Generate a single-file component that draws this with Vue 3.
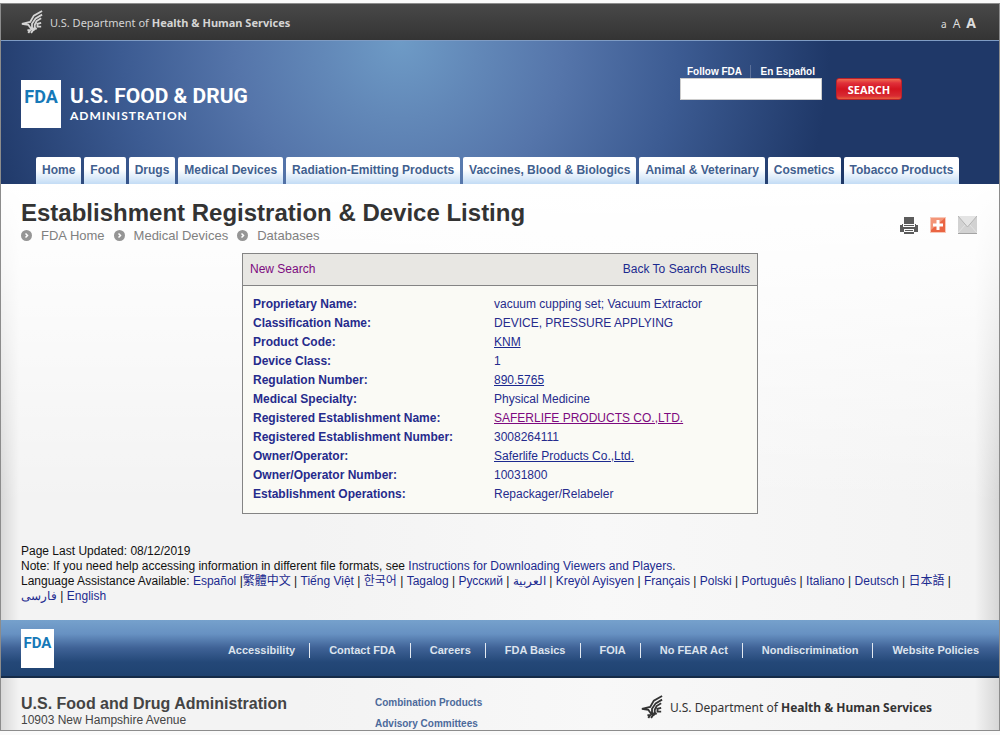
<template>
  <div class="page">
    <header>
      <div class="hhs-bar">
        <a href="#" class="hhs">
          <svg class="eagle" viewBox="0 0 24 26" aria-hidden="true">
            <path :d="eagle" />
          </svg>
          <span>U.S. Department of <b>Health &amp; Human Services</b></span>
        </a>
        <div class="sizes">
          <button class="small" aria-label="Small text">a</button>
          <button class="medium" aria-label="Medium text">A</button>
          <button class="large" aria-label="Large text">A</button>
        </div>
      </div>

      <div class="banner">
        <div class="banner-top">
          <a href="#" class="brand">
            <span class="fda">FDA</span>
            <span class="brand-text">
              <span class="brand-name">U.S. FOOD &amp; DRUG</span>
              <span class="brand-sub">ADMINISTRATION</span>
            </span>
          </a>
          <form class="search" @submit.prevent>
            <div class="search-field">
              <div class="quick-links">
                <a href="#">Follow FDA</a>
                <a href="#">En Español</a>
              </div>
              <input v-model="query" type="text" aria-label="Search FDA" />
            </div>
            <button class="search-button">SEARCH</button>
          </form>
        </div>
        <nav class="tabs">
          <a v-for="tab in tabs" :key="tab" href="#">{{ tab }}</a>
        </nav>
      </div>
    </header>

    <main>
      <div class="title-row">
        <div>
          <h1>Establishment Registration &amp; Device Listing</h1>
          <nav class="crumbs">
            <a v-for="crumb in crumbs" :key="crumb" href="#">
              <svg viewBox="0 0 11 11" aria-hidden="true">
                <circle cx="5.500" cy="5.500" r="5.500" fill="#959595" />
                <path d="M4.500 3.500L6.500 5.500L4.500 7.500" fill="none" stroke="#fff" stroke-width="1.500" />
              </svg>
              <span>{{ crumb }}</span>
            </a>
          </nav>
        </div>
        <div class="tools">
          <button aria-label="Print">
            <svg width="18" height="18" viewBox="0 0 18 18">
              <path d="M4 1H14V8H4ZM0 9H2V8H3V11H15V8H16V9H18V16H14V13H4V16H0ZM5 14H13V15H5ZM4 16H14V18H4Z" fill="#5c5c5c" />
              <path d="M4 9H14V10H4Z" fill="#5c5c5c" />
            </svg>
          </button>
          <button aria-label="Share">
            <svg width="16" height="16" viewBox="0 0 16 16">
              <rect width="16" height="16" fill="#f8c8b8" />
              <rect x="1" y="1" width="14" height="14" fill="#ea6543" />
              <path d="M1 1H15L1 13Z" fill="#f39578" />
              <path d="M6.500 3H9.500V6.500H13V9.500H9.500V13H6.500V9.500H3V6.500H6.500Z" fill="#fff" />
            </svg>
          </button>
          <button aria-label="Email">
            <svg width="19" height="18" viewBox="0 0 19 18">
              <rect width="19" height="18" fill="#d2d2d2" />
              <path d="M0 0H19L9.500 11Z" fill="#e4e4e4" />
              <path d="M0 0L9.500 11L19 0" fill="none" stroke="#b4b4b4" />
              <path d="M0 17L7 9M19 17L12 9" fill="none" stroke="#e2e2e2" />
              <path d="M0 17.500H19" stroke="#a4a4a4" />
            </svg>
          </button>
        </div>
      </div>

      <section class="record">
        <div class="record-head">
          <a href="#" class="visited">New Search</a>
          <a href="#">Back To Search Results</a>
        </div>
        <table>
          <tbody>
            <tr v-for="row in rows" :key="row.label">
              <th scope="row">{{ row.label }}:</th>
              <td>
                <a v-if="row.link" href="#" :class="{ visited: row.visited }">{{ row.value }}</a>
                <template v-else>{{ row.value }}</template>
              </td>
            </tr>
          </tbody>
        </table>
      </section>

      <div class="notes">
        <p>Page Last Updated: 08/12/2019</p>
        <p>Note: If you need help accessing information in different file formats, see <a href="#">Instructions for Downloading Viewers and Players</a>.</p>
        <p>
          Language Assistance Available:
          <template v-for="(lang, i) in languages" :key="lang"><a href="#">{{ lang }}</a><template v-if="i === 0"> |</template><template v-else-if="i < languages.length - 1"> | </template></template>
        </p>
      </div>
    </main>

    <footer>
      <div class="footer-bar">
        <a href="#" class="fda fda-small">FDA</a>
        <nav class="footer-links">
          <a v-for="link in footerLinks" :key="link" href="#">{{ link }}</a>
        </nav>
      </div>
      <div class="footer-info">
        <address>
          <strong>U.S. Food and Drug Administration</strong>
          <span>10903 New Hampshire Avenue</span>
        </address>
        <div class="offices">
          <a href="#">Combination Products</a>
          <a href="#">Advisory Committees</a>
        </div>
        <a href="#" class="hhs hhs-dark">
          <svg class="eagle" viewBox="0 0 24 26" aria-hidden="true">
            <path :d="eagle" />
          </svg>
          <span>U.S. Department of <b>Health &amp; Human Services</b></span>
        </a>
      </div>
    </footer>
  </div>
</template>

<script setup>
import { ref } from 'vue'

const query = ref('')

// shared by the top bar and the footer
const eagle = 'M23 1L14 6L10 13L1 15L8 16L10 19M23 5L16 9L12 15L12 19L15 22M22 9L17 12L15 16L15 19L17 21M22 14L18 15L18 18L22 18M10 19L13 22L11 25M7 22H10L8 25'

const tabs = [
  'Home',
  'Food',
  'Drugs',
  'Medical Devices',
  'Radiation-Emitting Products',
  'Vaccines, Blood & Biologics',
  'Animal & Veterinary',
  'Cosmetics',
  'Tobacco Products'
]

const crumbs = ['FDA Home', 'Medical Devices', 'Databases']

const rows = [
  { label: 'Proprietary Name', value: 'vacuum cupping set; Vacuum Extractor' },
  { label: 'Classification Name', value: 'DEVICE, PRESSURE APPLYING' },
  { label: 'Product Code', value: 'KNM', link: true },
  { label: 'Device Class', value: '1' },
  { label: 'Regulation Number', value: '890.5765', link: true },
  { label: 'Medical Specialty', value: 'Physical Medicine' },
  { label: 'Registered Establishment Name', value: 'SAFERLIFE PRODUCTS CO.,LTD.', link: true, visited: true },
  { label: 'Registered Establishment Number', value: '3008264111' },
  { label: 'Owner/Operator', value: 'Saferlife Products Co.,Ltd.', link: true },
  { label: 'Owner/Operator Number', value: '10031800' },
  { label: 'Establishment Operations', value: 'Repackager/Relabeler' }
]

const languages = [
  'Español', '繁體中文', 'Tiếng Việt', '한국어', 'Tagalog', 'Русский', 'العربية',
  'Kreyòl Ayisyen', 'Français', 'Polski', 'Português', 'Italiano', 'Deutsch',
  '日本語', 'فارسی', 'English'
]

const footerLinks = [
  'Accessibility',
  'Contact FDA',
  'Careers',
  'FDA Basics',
  'FOIA',
  'No FEAR Act',
  'Nondiscrimination',
  'Website Policies'
]
</script>

<style>
body {
  background: #fafafa;
}
</style>

<style scoped>
.page {
  margin: 3px 0 4px;
  border: 1px solid #8c8c8c;
  background: linear-gradient(90deg, #d8d8d8 0, #f3f3f3 18px, #f3f3f3 30%, #f8f8f8 60%, #f3f3f3 calc(100% - 24px), #d6d6d6 100%);
  font-family: "Liberation Sans", Arial, "Noto Sans CJK TC", "Noto Sans CJK KR", sans-serif;
  font-size: 12px;
  line-height: 15px;
}

a {
  color: #1c2a8f;
  text-decoration: none;
}

button {
  padding: 0;
  border: 0;
  background: none;
  font-family: inherit;
  cursor: pointer;
}

.hhs-bar {
  display: flex;
  justify-content: space-between;
  align-items: center;
  height: 36px;
  padding: 0 23px 0 20px;
  border-bottom: 1px solid #7f9cc4;
  background: linear-gradient(#484848, #343434);
}

.hhs {
  display: flex;
  align-items: center;
  gap: 7px;
  color: #d4d4d4;
  font-family: "Noto Sans", sans-serif;
  font-size: 11px;
}

.eagle {
  width: 22px;
  height: 24px;
  fill: none;
  stroke: currentColor;
  stroke-width: 2;
}

.sizes {
  display: flex;
  align-items: baseline;
  gap: 6px;
}

.sizes button {
  color: #ddd;
  font-family: "Noto Sans", sans-serif;
}

.sizes .small {
  font-size: 10px;
}

.sizes .medium {
  font-size: 12px;
}

.sizes .large {
  font-size: 14px;
  font-weight: bold;
}

.banner {
  background: radial-gradient(circle 430px at 40% 0, #6e9bc6 0, #6288b8 18%, #5575aa 38%, #3c5b92 65%, #1f3868 100%) #1f3868;
}

.banner-top {
  display: flex;
  justify-content: space-between;
  height: 92px;
  padding: 24px 97px 0 20px;
}

.brand {
  display: flex;
  align-items: flex-start;
  gap: 9px;
  padding-top: 15px;
  color: #fff;
}

.fda {
  width: 40px;
  height: 48px;
  padding-top: 8px;
  box-sizing: border-box;
  background: #fff;
  color: #1679b8;
  font-family: Roboto, sans-serif;
  font-size: 18px;
  font-weight: bold;
  line-height: 18px;
  text-align: center;
}

.brand-text {
  display: flex;
  flex-direction: column;
  padding-top: 4px;
  font-family: Roboto, sans-serif;
}

.brand-name {
  font-size: 21px;
  font-weight: bold;
  line-height: 24px;
}

.brand-sub {
  font-family: Lato, sans-serif;
  font-size: 12px;
  font-weight: bold;
  line-height: 16px;
  letter-spacing: 1px;
}

.search {
  display: flex;
  align-items: flex-start;
  gap: 14px;
}

.search-field {
  width: 142px;
}

.quick-links {
  display: flex;
  justify-content: space-between;
  padding: 0 7px;
}

.quick-links a {
  color: #fff;
  font-size: 10px;
  font-weight: bold;
  line-height: 13px;
}

.quick-links a + a {
  padding-left: 10px;
  border-left: 1px solid #5d7199;
}

.search input {
  display: block;
  width: 100%;
  height: 22px;
  box-sizing: border-box;
  border: 1px solid #ccc;
  background: #fff;
}

.search-button {
  width: 66px;
  height: 22px;
  margin-top: 13px;
  border: 1px solid #b8222b;
  border-radius: 3px;
  background: linear-gradient(#ef6a4e 0, #e0303a 20%, #d3141f 50%, #d82b33 85%, #e8603d 100%);
  color: #fff;
  font-family: "Open Sans", sans-serif;
  font-size: 11px;
  font-weight: bold;
}

.tabs {
  display: flex;
  gap: 3px;
  padding-left: 35px;
}

.tabs a {
  padding: 6px;
  border-radius: 2px 2px 0 0;
  background: linear-gradient(#fff 45%, #c3dcf5);
  color: #41608f;
  font-weight: bold;
  white-space: nowrap;
}

main {
  padding: 14px 20px 15px;
  background: linear-gradient(#fff 0, #ffffffcc 80px, #ffffff00 320px);
}

.title-row {
  display: flex;
  justify-content: space-between;
}

h1 {
  margin: 0;
  color: #333;
  font-size: 24px;
  line-height: 30px;
}

.crumbs {
  display: flex;
  gap: 9px;
  font-size: 13px;
}

.crumbs a {
  display: flex;
  align-items: center;
  gap: 9px;
  color: #808080;
}

.crumbs svg {
  width: 11px;
  height: 11px;
}

.tools {
  display: flex;
  align-items: center;
  gap: 12px;
  padding: 9px 2px 0 0;
}

.tools svg {
  display: block;
}

.record {
  max-width: 514px;
  margin: 10px auto 30px;
  border: 1px solid #848484;
  background: #fafaf5;
  color: #262b8c;
}

.record-head {
  display: flex;
  justify-content: space-between;
  padding: 8px 7px;
  border-bottom: 1px solid #848484;
  background: #e8e7e3;
}

.visited {
  color: #7d0a80;
}

table {
  width: 100%;
  margin: 9px 0;
  border-spacing: 0;
}

th,
td {
  padding: 2px 10px;
  text-align: left;
}

th {
  width: 231px;
}

td {
  padding-left: 0;
}

td a {
  text-decoration: underline;
}

.notes {
  color: #111;
}

.notes p {
  margin: 0;
}

.footer-bar {
  display: flex;
  justify-content: space-between;
  align-items: center;
  height: 56px;
  margin-top: 1px;
  padding: 0 20px;
  border-bottom: 2px solid #152b48;
  background: linear-gradient(#76a1cc 0, #6791c2 25%, #3f6296 50%, #244878 75%, #1f4270);
}

.fda-small {
  width: 33px;
  height: 39px;
  padding-top: 5px;
  font-size: 15px;
}

.footer-links {
  display: flex;
  padding-top: 4px;
}

.footer-links a {
  padding: 0 14px 0 19px;
  color: #dde4ee;
  font-size: 11px;
  font-weight: bold;
}

.footer-links a + a {
  border-left: 1px solid #e4eaf2;
}

.footer-links a:last-child {
  padding-right: 0;
}

.footer-info {
  display: grid;
  grid-template-columns: 354px 266px 1fr;
  align-items: start;
  height: 52px;
  padding: 0 20px;
  overflow: hidden;
}

address {
  display: flex;
  flex-direction: column;
  padding-top: 17px;
  color: #444;
  font-style: normal;
}

address strong {
  font-size: 16px;
  line-height: 18px;
}

.offices {
  display: flex;
  flex-direction: column;
  gap: 6px;
  padding-top: 17px;
  font-size: 10px;
  font-weight: bold;
}

.offices a {
  color: #4c6a9b;
}

.hhs-dark {
  padding-top: 17px;
  color: #333;
  font-size: 12px;
}
</style>
